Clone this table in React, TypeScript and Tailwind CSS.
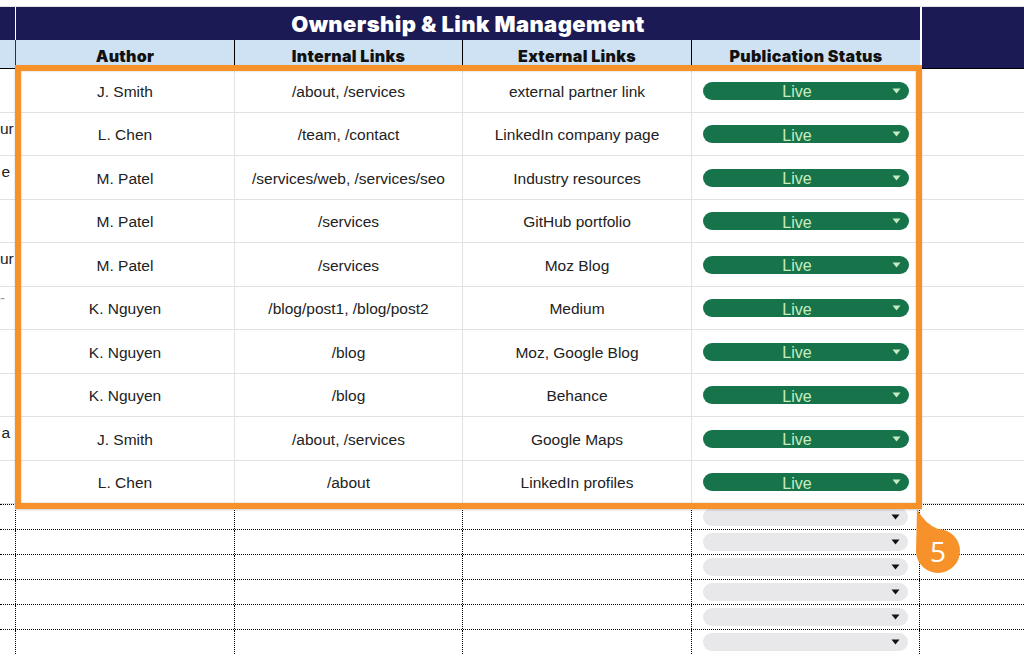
import React from "react";

const rows = [
  { author: "J. Smith", internal: "/about, /services", external: "external partner link", edge: "" },
  { author: "L. Chen", internal: "/team, /contact", external: "LinkedIn company page", edge: "ur" },
  { author: "M. Patel", internal: "/services/web, /services/seo", external: "Industry resources", edge: "e" },
  { author: "M. Patel", internal: "/services", external: "GitHub portfolio", edge: "" },
  { author: "M. Patel", internal: "/services", external: "Moz Blog", edge: "ur" },
  { author: "K. Nguyen", internal: "/blog/post1, /blog/post2", external: "Medium", edge: "-" },
  { author: "K. Nguyen", internal: "/blog", external: "Moz, Google Blog", edge: "" },
  { author: "K. Nguyen", internal: "/blog", external: "Behance", edge: "" },
  { author: "J. Smith", internal: "/about, /services", external: "Google Maps", edge: "a" },
  { author: "L. Chen", internal: "/about", external: "LinkedIn profiles", edge: "" },
];

function Caret({ color }: { color: string }) {
  return (
    <svg width="9" height="6" viewBox="0 0 9 6" className="shrink-0">
      <path d="M0.5 0.5 H8.5 L4.5 5.5 Z" fill={color} />
    </svg>
  );
}

function StatusPill({ live }: { live: boolean }) {
  return (
    <div
      className={
        live
          ? "relative mx-[11px] flex h-[18px] w-[206px] items-center justify-center rounded-full bg-[#17744a] pr-[18px]"
          : "relative mx-[11px] flex h-[18px] w-[206px] items-center justify-center rounded-full bg-[#e8e8eb]"
      }
    >
      {live && <span className="pt-[3px] text-[16px] leading-none text-[#c8ecc1]">Live</span>}
      <span className="absolute right-[8px] top-[6px] flex">
        <Caret color={live ? "#c8ecc1" : "#111111"} />
      </span>
    </div>
  );
}

export default function App() {
  return (
    <div className="relative h-[656px] w-[1024px] overflow-hidden bg-white font-['Liberation_Sans',Arial,sans-serif] text-[#222]">
      <div className="h-[7px] border-b border-[#e4e4e4]" />

      {/* title row */}
      <div className="flex h-[33px]">
        <div className="w-[15px] bg-[#1b1a55]" />
        <div className="w-px bg-white" />
        <div className="flex w-[904px] items-center justify-center bg-[#1b1a55] pt-[1px] font-['Inter',sans-serif] text-[22px] font-black tracking-[0.4px] text-white">
          Ownership &amp; Link Management
        </div>
        <div className="w-[2px] bg-white" />
        <div className="flex-1 bg-[#1b1a55]" />
      </div>

      {/* column headers */}
      <div className="flex h-[29px] font-['Inter',sans-serif] text-[16px] font-black tracking-[0.3px] text-[#111]">
        <div className="w-[15px] border-b border-black bg-[#cfe2f3]" />
        <div className="w-px bg-[#333]" />
        <div className="flex w-[219px] items-center justify-center border-r border-black bg-[#cfe2f3] pt-[3px]">Author</div>
        <div className="flex w-[228px] items-center justify-center border-r border-black bg-[#cfe2f3] pt-[3px]">Internal Links</div>
        <div className="flex w-[229px] items-center justify-center border-r border-black bg-[#cfe2f3] pt-[3px]">External Links</div>
        <div className="flex w-[228px] items-center justify-center bg-[#cfe2f3] pt-[3px]">Publication Status</div>
        <div className="w-[2px] bg-white" />
        <div className="flex-1 border-b border-black bg-[#1b1a55]" />
      </div>

      {/* data rows */}
      {rows.map((r, i) => (
        <div key={i} className="flex h-[43.5px] border-b border-[#e2e2e2] text-[15.5px]">
          <div
            className={
              r.edge === "-"
                ? "w-[16px] overflow-hidden whitespace-nowrap pr-[13px] pt-[2px] text-right text-[15px] leading-[17px] text-[#999]"
                : "w-[16px] overflow-hidden whitespace-nowrap pr-[6px] pt-[7px] text-right text-[15.5px] leading-[17px] text-[#222]"
            }
          >
            {r.edge}
          </div>
          <div className="flex w-[219px] items-center justify-center border-r border-[#e2e2e2] pt-[2px]">{r.author}</div>
          <div className="flex w-[228px] items-center justify-center border-r border-[#e2e2e2] pt-[2px]">{r.internal}</div>
          <div className="flex w-[229px] items-center justify-center border-r border-[#e2e2e2] pt-[2px]">{r.external}</div>
          <div className="flex w-[228px] items-center pt-[1px]">
            <StatusPill live />
          </div>
          <div className="flex-1" />
        </div>
      ))}

      {/* empty rows */}
      {Array.from({ length: 6 }).map((_, i) => (
        <div key={i} className="flex h-[25px] border-t border-dotted border-black">
          <div className="w-[16px] border-r border-dotted border-black" />
          <div className="w-[219px] border-r border-dotted border-black" />
          <div className="w-[228px] border-r border-dotted border-black" />
          <div className="w-[229px] border-r border-dotted border-black" />
          <div className="flex w-[228px] items-center border-r border-dotted border-black">
            <StatusPill live={false} />
          </div>
          <div className="flex-1" />
        </div>
      ))}

      {/* highlight frame */}
      <div className="pointer-events-none absolute left-[15px] top-[65px] h-[444px] w-[907px] border-[6px] border-[#f7922a] shadow-[inset_0_0_2px_rgba(0,0,0,0.25),0_1px_2px_rgba(0,0,0,0.2)]" />

      {/* step badge */}
      <div className="absolute left-[916px] top-[509px] h-[64px] w-[44px]">
        <svg width="44" height="64" viewBox="0 0 44 64" className="absolute inset-0">
          <path d="M1 0 Q9 15 22 20 A22 22 0 1 1 0 42 Z" fill="#f7922a" />
        </svg>
        <span className="absolute left-0 top-[25px] flex h-[34px] w-[44px] items-center justify-center font-['Open_Sans',sans-serif] text-[28px] font-normal text-white">
          5
        </span>
      </div>
    </div>
  );
}
